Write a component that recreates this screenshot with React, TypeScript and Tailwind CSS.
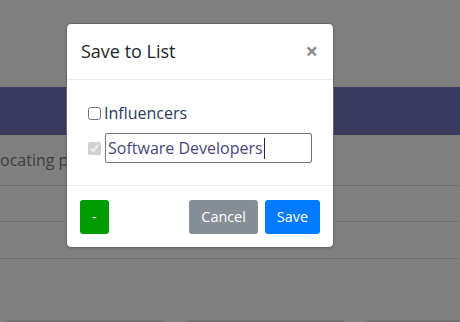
import React from "react";

export default function App() {
  return (
    <div
      className="relative w-[460px] h-[322px] overflow-hidden bg-[#808080]"
      style={{ fontFamily: "'Open Sans', 'Liberation Sans', sans-serif" }}
    >
      {/* Page behind the backdrop */}
      <div className="h-[87px]" />
      <div className="h-[48px] bg-[#3b3a5f]" />
      <div className="h-[51px] flex items-center border-b border-[#6f6f6f] text-[16px] leading-6 text-[#3d3d3d] whitespace-nowrap">
        ocating processes
      </div>
      <div className="h-[36px] border-b border-[#6f6f6f]" />
      <div className="h-[37px] border-b border-[#6f6f6f]" />
      <div className="h-[61px]" />
      <div className="flex gap-[19px] pl-[5px]">
        <div className="w-[161px] h-[12px] shrink-0 rounded-[6px] border-2 border-[#727272]" />
        <div className="w-[161px] h-[12px] shrink-0 rounded-[6px] border-2 border-[#727272]" />
        <div className="w-[161px] h-[12px] shrink-0 rounded-[6px] border-2 border-[#727272]" />
      </div>

      {/* Modal */}
      <div className="absolute left-[66px] top-[23px] w-[268px] rounded-[5px] border border-[#666] bg-white shadow-sm">
        <div className="flex items-center justify-between px-[14px] py-[14px] border-b border-[#e9ecef]">
          <h5 className="text-[18px] leading-[27px] text-[#212529]">Save to List</h5>
          <span className="text-[22px] leading-[27px] font-bold text-[#8a8a8a] mr-[1px] -mt-[2px]">×</span>
        </div>

        <div className="px-[21px] pt-[21px] pb-[22px]">
          <label className="flex items-center h-6 gap-[3px]">
            <input type="checkbox" className="m-0 w-[13px] h-[13px]" />
            <span className="text-[16px] leading-6 text-[#2a3a5a]">Influencers</span>
          </label>
          <div className="flex items-center mt-[8px] gap-[4px]">
            <input type="checkbox" checked disabled readOnly className="m-0 w-[13px] h-[13px]" />
            <div className="flex items-center w-[207px] h-[30px] rounded-[2px] border border-[#767676] pl-[2px]">
              <span className="text-[16px] leading-6 text-[#4a4878] whitespace-nowrap">Software Developers</span>
              <span className="ml-[1px] w-[1px] h-[21px] bg-[#232a52]" />
            </div>
          </div>
        </div>

        <div className="flex items-center justify-between px-[13px] pt-[14px] pb-[13px] border-t border-[#e9ecef]">
          <button className="h-[34px] px-3 rounded-[3px] bg-[#009b00] text-white text-[14.4px]">-</button>
          <div className="flex gap-[7px]">
            <button className="h-[34px] px-3 rounded-[3px] bg-[#868e96] text-white text-[14.4px]">Cancel</button>
            <button className="h-[34px] px-3 rounded-[3px] bg-[#007bff] text-white text-[14.4px]">Save</button>
          </div>
        </div>
      </div>
    </div>
  );
}
